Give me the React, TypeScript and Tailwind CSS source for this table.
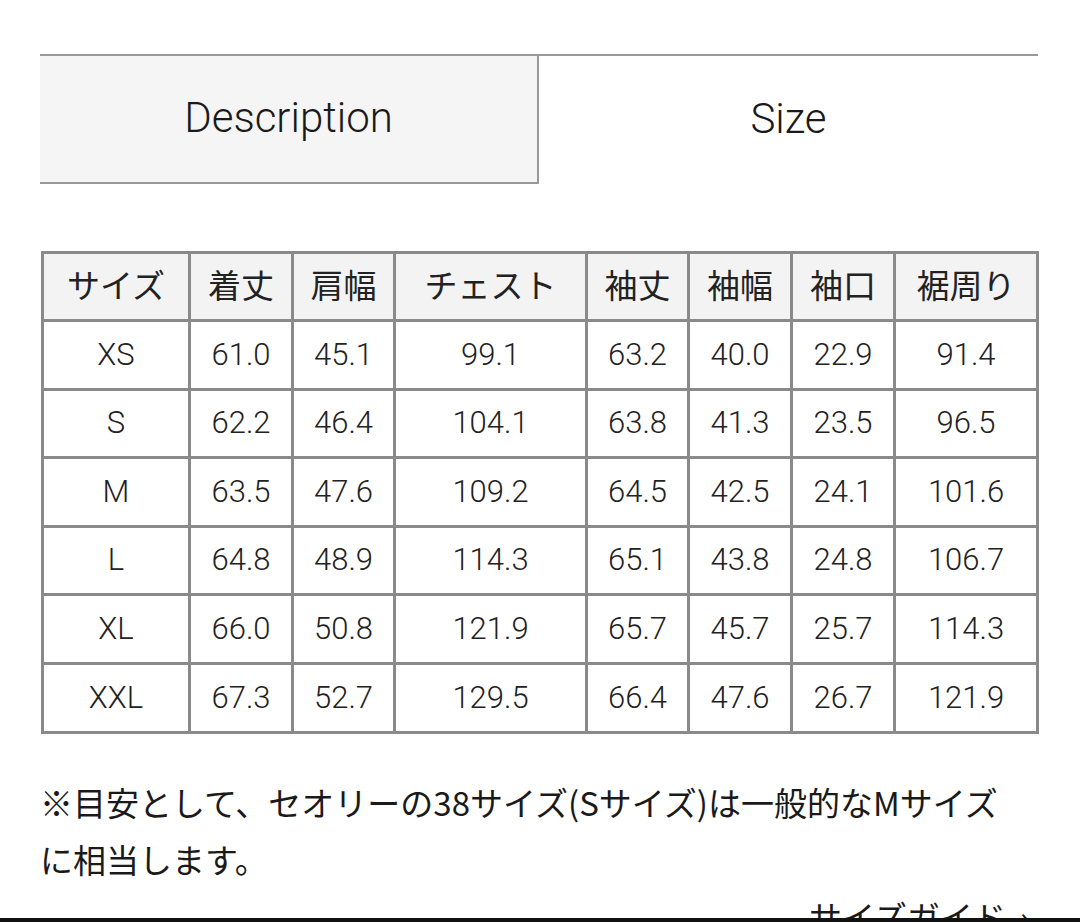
const rows = [
    ['XS', '61.0', '45.1', '99.1', '63.2', '40.0', '22.9', '91.4'],
    ['S', '62.2', '46.4', '104.1', '63.8', '41.3', '23.5', '96.5'],
    ['M', '63.5', '47.6', '109.2', '64.5', '42.5', '24.1', '101.6'],
    ['L', '64.8', '48.9', '114.3', '65.1', '43.8', '24.8', '106.7'],
    ['XL', '66.0', '50.8', '121.9', '65.7', '45.7', '25.7', '114.3'],
    ['XXL', '67.3', '52.7', '129.5', '66.4', '47.6', '26.7', '121.9'],
];

const headers = ['サイズ', '着丈', '肩幅', 'チェスト', '袖丈', '袖幅', '袖口', '裾周り'];
const colWidths = ['w-[147px]', 'w-[103px]', 'w-[102px]', 'w-[192px]', 'w-[102px]', 'w-[103px]', 'w-[103px]', 'w-[143px]'];

const SizeTable = () => (
    <table className="ml-[41px] mt-[67px] w-[995px] table-fixed border-collapse border-[3px] border-[#8a8a8a] text-[31px] font-light text-[#222]">
        <colgroup>
            {colWidths.map((w, i) => (
                <col key={i} className={w} />
            ))}
        </colgroup>
        <thead>
            <tr className="h-[68px] bg-[#f3f3f3]">
                {headers.map((h) => (
                    <th key={h} className="border-[3px] border-[#8a8a8a] p-0 text-center text-[33px] font-normal">
                        {h}
                    </th>
                ))}
            </tr>
        </thead>
        <tbody>
            {rows.map((row) => (
                <tr key={row[0]} className="h-[68.6px]">
                    {row.map((cell, i) => (
                        <td key={i} className="border-[3px] border-[#8a8a8a] p-0 text-center">
                            {cell}
                        </td>
                    ))}
                </tr>
            ))}
        </tbody>
    </table>
);

export default function App() {
    return (
        <div
            className="relative h-[922px] w-[1080px] overflow-hidden bg-white text-[#1a1a1a]"
            style={{ fontFamily: 'Roboto, "Noto Sans CJK JP", sans-serif' }}
        >
            <div className="ml-[40px] mt-[54px] flex w-[998px] border-t-2 border-[#999]">
                <div className="flex h-[128px] w-[499px] items-center justify-center border-r-2 border-b-2 border-[#999] bg-[#f5f5f5] pb-[3px] text-[42px] font-light">
                    Description
                </div>
                <div className="flex h-[128px] flex-1 items-center justify-center pb-[3px] text-[42px] font-light">Size</div>
            </div>

            <SizeTable />

            <p className="ml-[40px] mt-[40px] text-[33px] leading-[57px]" style={{ fontFamily: '"Noto Sans CJK JP", sans-serif' }}>
                ※目安として、セオリーの38サイズ(Sサイズ)は一般的なMサイズ
                <br />
                に相当します。
            </p>

            <div className="ml-[41px] w-[989px] text-right text-[33px] leading-[57px]" style={{ fontFamily: '"Noto Sans CJK JP", sans-serif' }}>
                サイズガイド<span className="ml-[14px]">›</span>
            </div>

            <div className="absolute bottom-0 left-0 h-[4px] w-full bg-[#111]" />
        </div>
    );
}
